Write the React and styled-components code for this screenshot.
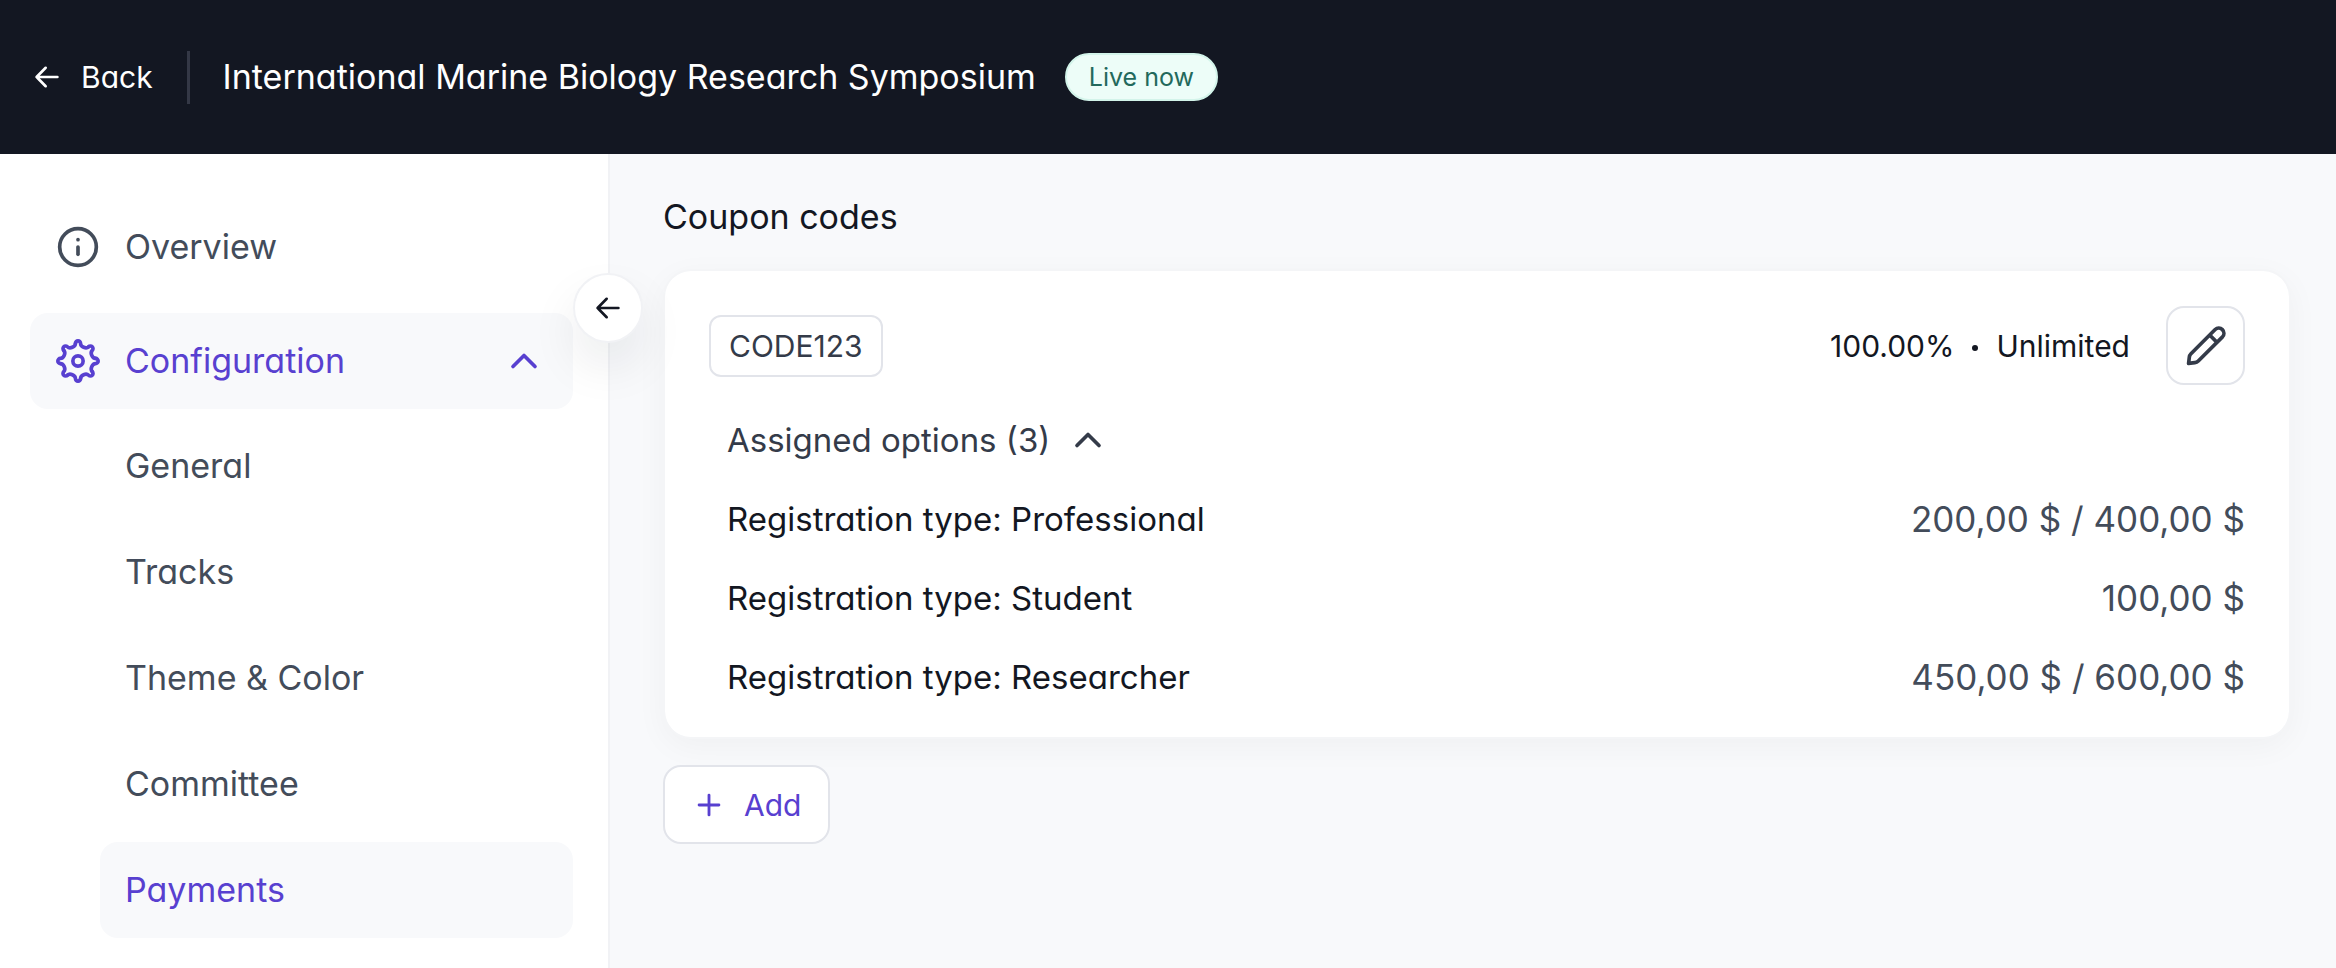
import { useState } from 'react';
import styled, { createGlobalStyle } from 'styled-components';
import { ChevronUp, Info, Plus } from 'lucide-react';

const GlobalStyle = createGlobalStyle`
  *, *::before, *::after {
    box-sizing: border-box;
  }
  body {
    margin: 0;
    background: #f8f9fb;
    color: #131722;
    font-family: Inter, 'Open Sans', sans-serif;
    font-feature-settings: 'cv11';
    font-size: 33px;
    line-height: 44px;
  }
  button {
    font: inherit;
    font-feature-settings: inherit;
    cursor: pointer;
  }
  svg {
    flex-shrink: 0;
  }
`;

const Page = styled.div`
  min-height: 100vh;
  display: flex;
  flex-direction: column;
`;
const Header = styled.header`
  display: flex;
  align-items: center;
  height: 154px;
  padding: 0 31px;
  background: #131722;
  color: #ffffff;
`;
const BackLink = styled.a`
  display: flex;
  align-items: center;
  gap: 18px;
  color: inherit;
  font-size: 30px;
  text-decoration: none;
`;
const Divider = styled.span`
  width: 3px;
  height: 53px;
  margin: 0 33px 0 34px;
  background: #343846;
`;
const EventTitle = styled.h1`
  margin: 0;
  font-size: 34px;
  font-weight: 400;
`;
const LiveBadge = styled.span`
  margin-left: 29px;
  padding: 0 22px;
  border: 2px solid #d3f4ea;
  border-radius: 24px;
  background: #edfdf8;
  color: #23695c;
  font-size: 25px;
`;
const Body = styled.div`
  flex: 1;
  display: flex;
`;
const Sidebar = styled.aside`
  position: relative;
  flex: 0 0 610px;
  padding: 45px 35px 28px 30px;
  border-right: 2px solid #f1f2f5;
  background: #ffffff;
`;
const CollapseButton = styled.button`
  position: absolute;
  top: 119px;
  right: -35px;
  z-index: 1;
  display: flex;
  align-items: center;
  justify-content: center;
  width: 70px;
  height: 70px;
  padding: 0;
  border: 2px solid #f1f2f5;
  border-radius: 50%;
  background: #ffffff;
  color: #131722;
  box-shadow: 0 24px 48px rgba(19, 23, 34, 0.08);
`;
const Nav = styled.nav`
  display: flex;
  flex-direction: column;
  gap: 18px;
`;
const NavItem = styled.a`
  display: flex;
  align-items: center;
  gap: 25px;
  height: 96px;
  padding: 0 27px 0 26px;
  border-radius: 18px;
  background: ${(p) => (p.$active ? '#f8f9fb' : 'transparent')};
  color: ${(p) => (p.$active ? '#5840d0' : '#434c5a')};
  font-size: 34px;
  text-decoration: none;
`;
const NavLabel = styled.span`
  flex: 1;
`;
const SubNav = styled.div`
  display: flex;
  flex-direction: column;
  gap: 10px;
  margin: -9px 0 0 70px;
`;
const SubNavItem = styled(NavItem)`
  padding: 0 25px;
`;
const Main = styled.main`
  flex: 1;
  min-width: 0;
  padding: 41px 45px 41px 53px;
`;
const Heading = styled.h2`
  margin: 0 0 30px;
  font-size: 34px;
  font-weight: 400;
`;
const Card = styled.section`
  padding: 35px 44px 21px;
  border: 2px solid #f4f5f7;
  border-radius: 28px;
  background: #ffffff;
  background-clip: padding-box;
  box-shadow: 0 8px 32px rgba(19, 23, 34, 0.04);
`;
const CardHead = styled.div`
  display: flex;
  align-items: center;
  margin-bottom: 15px;
`;
const Code = styled.span`
  margin-right: auto;
  padding: 7px 18px;
  border: 2px solid #e2e4ea;
  border-radius: 12px;
  color: #343b49;
  font-size: 30px;
`;
const Terms = styled.span`
  display: flex;
  align-items: center;
  gap: 18px;
  margin-right: 36px;
  font-size: 30px;
`;
const Dot = styled.span`
  width: 6px;
  height: 6px;
  margin-top: 4px;
  border-radius: 50%;
  background: currentColor;
`;
const OutlineButton = styled.button`
  display: flex;
  align-items: center;
  justify-content: center;
  gap: 18px;
  height: 79px;
  border: 2px solid #e2e4ea;
  border-radius: 18px;
  background: #ffffff;
`;
const EditButton = styled(OutlineButton)`
  width: 79px;
  padding: 0;
  color: #343b49;
`;
const AddButton = styled(OutlineButton)`
  margin-top: 26px;
  padding: 0 27px;
  color: #5840d0;
  font-size: 30px;
`;
const Assigned = styled.div`
  padding-left: 18px;
`;
const AssignedToggle = styled.button`
  display: flex;
  align-items: center;
  gap: 16px;
  height: 79px;
  padding: 0;
  border: none;
  background: none;
  color: #343b49;
`;
const OptionsTable = styled.table`
  width: 100%;
  border-collapse: collapse;
`;
const OptionName = styled.th`
  height: 79px;
  padding: 0;
  font-weight: 400;
  text-align: left;
`;
const OptionPrice = styled.td`
  padding: 0;
  color: #434c5a;
  font-size: 35px;
  text-align: right;
`;

const Icon = ({ size = 44, children }) => (
  <svg
    width={size}
    height={size}
    viewBox="0 0 24 24"
    fill="none"
    stroke="currentColor"
    strokeWidth="2"
    strokeLinecap="round"
    strokeLinejoin="round"
    aria-hidden="true"
  >
    {children}
  </svg>
);

const ArrowLeft = () => (
  <Icon size={32}>
    <path d="M19.8 12H4.2M11 5.1 4.2 12l6.8 6.9" />
  </Icon>
);

const Pencil = () => (
  <Icon>
    <path d="M2.9 18.1c.1-.8.2-1.2.9-1.9L17 3a2.83 2.83 0 0 1 4 4L7.8 20.2c-.7.7-1.1.8-1.9.9l-3.4.4zM14 6l4 4" />
  </Icon>
);

const TEETH = [0, 45, 90, 135, 180, 225, 270, 315];

const Gear = () => (
  <Icon>
    <circle cx="12" cy="12" r="2.8" />
    {TEETH.map((angle) => (
      <path
        key={angle}
        transform={`rotate(${angle} 12 12)`}
        d="M10.6 2.4a1.4 1.4 0 0 1 2.8 0C13.4 4.3 16.46 5.56 17.8 4.22"
      />
    ))}
  </Icon>
);

const subPages = ['General', 'Tracks', 'Theme & Color', 'Committee', 'Payments'];

const options = [
  { name: 'Professional', price: '200,00 $ / 400,00 $' },
  { name: 'Student', price: '100,00 $' },
  { name: 'Researcher', price: '450,00 $ / 600,00 $' },
];

const CouponCard = () => {
  const [open, setOpen] = useState(true);

  return (
    <Card>
      <CardHead>
        <Code>CODE123</Code>
        <Terms>
          <span>100.00%</span>
          <Dot />
          <span>Unlimited</span>
        </Terms>
        <EditButton type="button" aria-label="Edit coupon">
          <Pencil />
        </EditButton>
      </CardHead>
      <Assigned>
        <AssignedToggle type="button" aria-expanded={open} onClick={() => setOpen(!open)}>
          Assigned options ({options.length})
          <ChevronUp size={44} strokeWidth={2} />
        </AssignedToggle>
        {open && (
          <OptionsTable>
            <tbody>
              {options.map(({ name, price }) => (
                <tr key={name}>
                  <OptionName scope="row">Registration type: {name}</OptionName>
                  <OptionPrice>{price}</OptionPrice>
                </tr>
              ))}
            </tbody>
          </OptionsTable>
        )}
      </Assigned>
    </Card>
  );
};

const App = () => (
  <Page>
    <GlobalStyle />
    <Header>
      <BackLink href="#back">
        <ArrowLeft />
        Back
      </BackLink>
      <Divider />
      <EventTitle>International Marine Biology Research Symposium</EventTitle>
      <LiveBadge>Live now</LiveBadge>
    </Header>
    <Body>
      <Sidebar>
        <Nav>
          <NavItem href="#overview">
            <Info size={44} />
            <NavLabel>Overview</NavLabel>
          </NavItem>
          <NavItem href="#configuration" $active>
            <Gear />
            <NavLabel>Configuration</NavLabel>
            <ChevronUp size={44} />
          </NavItem>
          <SubNav>
            {subPages.map((page) => (
              <SubNavItem key={page} href="#configuration" $active={page === 'Payments'}>
                {page}
              </SubNavItem>
            ))}
          </SubNav>
        </Nav>
        <CollapseButton type="button" aria-label="Collapse sidebar">
          <ArrowLeft />
        </CollapseButton>
      </Sidebar>
      <Main>
        <Heading>Coupon codes</Heading>
        <CouponCard />
        <AddButton type="button">
          <Plus size={34} />
          Add
        </AddButton>
      </Main>
    </Body>
  </Page>
);

export default App;
